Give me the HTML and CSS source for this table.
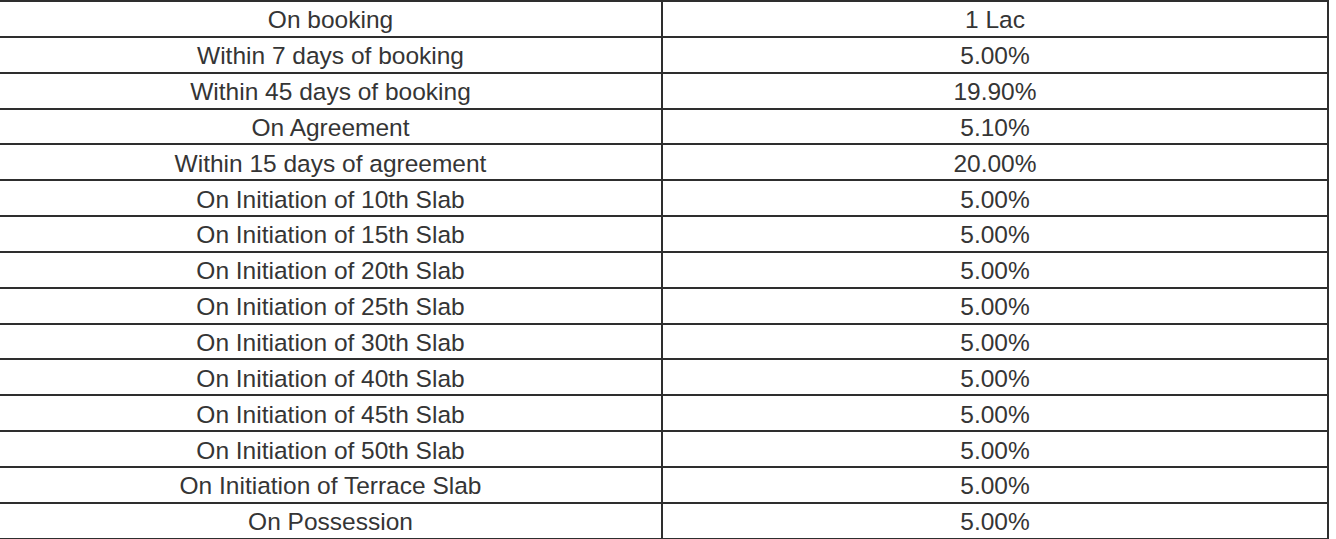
FILE: index.html
```html
<!DOCTYPE html>
<html lang="en">
<head>
<meta charset="utf-8">
<title>Payment Plan</title>
<link rel="stylesheet" href="styles.css">
</head>
<body>
<div class="plan">
  <div class="row"><div class="cell stage">On booking</div><div class="cell amount">1 Lac</div></div>
  <div class="row"><div class="cell stage">Within 7 days of booking</div><div class="cell amount">5.00%</div></div>
  <div class="row"><div class="cell stage">Within 45 days of booking</div><div class="cell amount">19.90%</div></div>
  <div class="row"><div class="cell stage">On Agreement</div><div class="cell amount">5.10%</div></div>
  <div class="row"><div class="cell stage">Within 15 days of agreement</div><div class="cell amount">20.00%</div></div>
  <div class="row"><div class="cell stage">On Initiation of 10th Slab</div><div class="cell amount">5.00%</div></div>
  <div class="row"><div class="cell stage">On Initiation of 15th Slab</div><div class="cell amount">5.00%</div></div>
  <div class="row"><div class="cell stage">On Initiation of 20th Slab</div><div class="cell amount">5.00%</div></div>
  <div class="row"><div class="cell stage">On Initiation of 25th Slab</div><div class="cell amount">5.00%</div></div>
  <div class="row"><div class="cell stage">On Initiation of 30th Slab</div><div class="cell amount">5.00%</div></div>
  <div class="row"><div class="cell stage">On Initiation of 40th Slab</div><div class="cell amount">5.00%</div></div>
  <div class="row"><div class="cell stage">On Initiation of 45th Slab</div><div class="cell amount">5.00%</div></div>
  <div class="row"><div class="cell stage">On Initiation of 50th Slab</div><div class="cell amount">5.00%</div></div>
  <div class="row"><div class="cell stage">On Initiation of Terrace Slab</div><div class="cell amount">5.00%</div></div>
  <div class="row"><div class="cell stage">On Possession</div><div class="cell amount">5.00%</div></div>
</div>
</body>
</html>
```
FILE: styles.css
```css
html, body {
  margin: 0;
  padding: 0;
  background: #ffffff;
  overflow: hidden;
}

.plan {
  width: 1327px;
  display: flex;
  flex-direction: column;
  border-top: 2px solid #2e2e2e;
  border-right: 2px solid #2e2e2e;
  font-family: "Liberation Sans", Arial, sans-serif;
  font-size: 24.5px;
  color: #353535;
}

.row {
  display: grid;
  grid-template-columns: 663px 1fr;
  height: 33.85px;
  border-bottom: 2px solid #2e2e2e;
  flex: none;
}

.cell {
  display: flex;
  align-items: center;
  justify-content: center;
  padding-top: 3px;
  box-sizing: border-box;
  white-space: nowrap;
}

.stage {
  border-right: 2px solid #2e2e2e;
}
```
